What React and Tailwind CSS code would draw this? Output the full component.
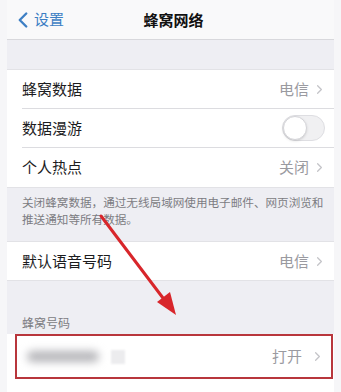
import { ChevronLeft, ChevronRight } from "lucide-react";

const font = { fontFamily: '"Noto Sans CJK SC", "Noto Sans", sans-serif' };

function Row({ label, value, last, children, big }) {
  return (
    <div className="flex items-center bg-white pl-[15px]">
      <div
        className={`flex flex-1 items-center pr-[7px] ${big ? "h-[38px]" : "h-[39px]"} ${
          last ? "" : "border-b border-[#dcdce0]"
        }`}
      >
        <span className="flex-1 text-[15px] text-[#1c1c1e]">{label}</span>
        {children}
        {value && (
          <span className="flex items-center text-[15px] text-[#9a9aa0]">
            {value}
            <ChevronRight className="ml-[3px] h-[15px] w-[15px] text-[#c4c4c8]" strokeWidth={2} />
          </span>
        )}
      </div>
    </div>
  );
}

export default function App() {
  return (
    <div
      className="relative h-[392px] w-[341px] overflow-hidden bg-[#f6f6f8] px-[7px]"
      style={font}
    >
      {/* nav */}
      <div className="relative flex h-10 items-center border-b border-[#d8d8dc] bg-[#f9f9fa]">
        <div className="z-10 flex items-center pl-[3px] text-[#3d7fc4]">
          <ChevronLeft className="h-[26px] w-[26px] -mr-[2px]" strokeWidth={2.2} />
          <span className="text-[15px]">设置</span>
        </div>
        <div className="absolute inset-x-0 top-0 flex h-10 items-center justify-center pl-[6px] text-[15px] font-bold text-[#111]">
          蜂窝网络
        </div>
      </div>

      <div className="bg-[#eeeef3]">
        <div className="h-[29px]" />

        <div className="border-y border-[#e2e2e6]">
          <Row label="蜂窝数据" value="电信" />
          <Row label="数据漫游">
            <div className="relative mr-[2px] h-[26px] w-[43px] rounded-full border border-[#dedee2] bg-[#f0f0f2]">
              <div className="absolute left-0 top-0 h-[24px] w-[24px] rounded-full border border-[#d4d4d8] bg-white shadow-sm" />
            </div>
          </Row>
          <Row label="个人热点" value="关闭" last />
        </div>

        <div className="pb-[13px] pl-[15px] pt-[6px] text-[11.6px] leading-[17px] text-[#7c7c82]">
          <div className="whitespace-nowrap">关闭蜂窝数据，通过无线局域网使用电子邮件、网页浏览和</div>
          <div>推送通知等所有数据。</div>
        </div>

        <div className="border-y border-[#e2e2e6]">
          <Row label="默认语音号码" value="电信" last big />
        </div>

        <div className="px-[15px] pb-[3px] pt-[33px] text-[12px] leading-[17px] text-[#7c7c82]">
          蜂窝号码
        </div>

        <div className="bg-white pb-[14px]">
          <div className="relative ml-[8px] mr-[1px] flex h-[45px] items-center border-2 border-[#b8363c] pr-[6px]">
            <div className="ml-[10px] h-[11px] w-[72px] rounded-full bg-[#b5b5b9] blur-[4px]" />
            <div className="ml-[12px] h-[14px] w-[14px] bg-[#ececee] blur-[1px]" />
            <span className="ml-auto flex items-center text-[15px] text-[#9a9aa0]">
              打开
              <ChevronRight className="ml-[8px] h-[15px] w-[15px] text-[#c4c4c8]" strokeWidth={2} />
            </span>
          </div>
        </div>
      </div>

      {/* annotation arrow */}
      <svg className="absolute left-0 top-0" width="341" height="392" viewBox="0 0 341 392">
        <line x1="101" y1="216" x2="166" y2="302" stroke="#d8262b" strokeWidth="3" strokeLinecap="round" />
        <polygon points="176,315 157,302 170,292" fill="#d8262b" />
      </svg>
    </div>
  );
}
